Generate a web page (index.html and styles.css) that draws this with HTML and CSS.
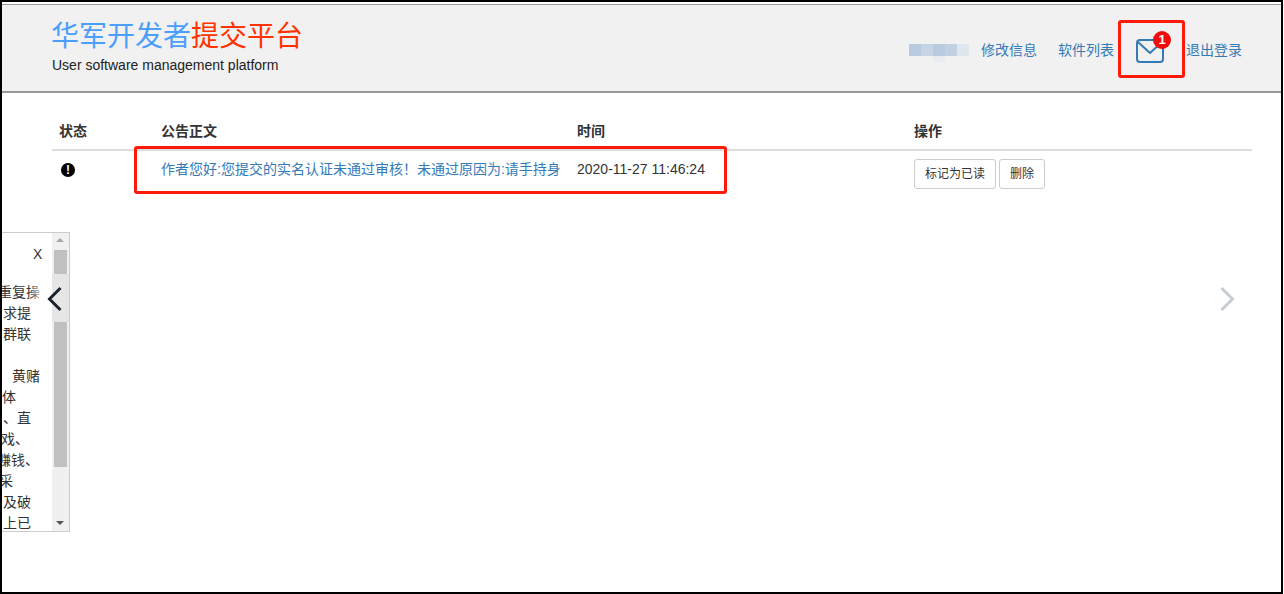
FILE: index.html
```html
<!DOCTYPE html>
<html lang="zh-CN">
<head>
<meta charset="utf-8">
<title>华军开发者提交平台</title>
<link rel="stylesheet" href="styles.css">
</head>
<body>
<div class="frame">
  <header class="header">
    <div class="logo">
      <h1 class="logo-title"><span class="blue">华军开发者</span><span class="red">提交平台</span></h1>
      <p class="logo-sub">User software management platform</p>
    </div>
    <nav class="nav">
      <span class="blurred-user"></span>
      <a class="nav-link first" href="#">修改信息</a>
      <a class="nav-link second" href="#">软件列表</a>
      <a class="mail" href="#">
        <svg class="mail-icon" width="28" height="24" viewBox="0 0 28 24" fill="none" stroke="#337ab7" stroke-width="2" stroke-linejoin="round">
          <rect x="1" y="1" width="26" height="22" rx="3"/>
          <path d="M2 3 L14 14 L26 3"/>
        </svg>
        <span class="badge">1</span>
      </a>
      <a class="nav-link" href="#">退出登录</a>
    </nav>
  </header>

  <main class="content">
    <table class="notice-table">
      <colgroup>
        <col class="col-status">
        <col class="col-body">
        <col class="col-time">
        <col class="col-actions">
      </colgroup>
      <thead>
        <tr><th>状态</th><th>公告正文</th><th>时间</th><th>操作</th></tr>
      </thead>
      <tbody>
        <tr>
          <td><span class="alert-dot">!</span></td>
          <td><a class="notice-link" href="#">作者您好:您提交的实名认证未通过审核！未通过原因为:请手持身</a></td>
          <td>2020-11-27 11:46:24</td>
          <td><button class="btn btn-first">标记为已读</button><button class="btn">删除</button></td>
        </tr>
      </tbody>
    </table>
  </main>

  <div class="mark mark-mail"></div>
  <div class="mark mark-row"></div>

  <aside class="popup">
    <div class="popup-close">X</div>
    <div class="popup-text">
      <div class="line end-40">重复操</div>
      <div class="line end-31">求提</div>
      <div class="line end-31">群联</div>
      <div class="line end-31">&nbsp;</div>
      <div class="line end-40">黄赌</div>
      <div class="line end-16">体</div>
      <div class="line end-31">、直</div>
      <div class="line end-29">戏、</div>
      <div class="line end-39">赚钱、</div>
      <div class="line end-13">采</div>
      <div class="line end-31">及破</div>
      <div class="line end-31">上已</div>
    </div>
    <div class="scrollbar">
      <span class="arrow-up"></span>
      <span class="thumb"></span>
      <span class="arrow-down"></span>
    </div>
  </aside>

  <div class="carousel-band"></div>
  <svg class="chevron chevron-left" width="16" height="26" viewBox="0 0 16 26" fill="none" stroke="#1a2430" stroke-width="3">
    <path d="M13.5 2 L2.5 13 L13.5 24"/>
  </svg>
  <svg class="chevron chevron-right" width="16" height="26" viewBox="0 0 16 26" fill="none" stroke="#c6ccd2" stroke-width="3">
    <path d="M2.5 2 L13.5 13 L2.5 24"/>
  </svg>
</div>
</body>
</html>
```
FILE: styles.css
```css
* { box-sizing: border-box; }
html, body { margin: 0; padding: 0; background: #fff; }
body {
  font-family: "Liberation Sans", "Noto Sans CJK SC", sans-serif;
  font-size: 14px;
  line-height: 20px;
  color: #333;
}
a { color: #337ab7; text-decoration: none; }

.frame {
  position: relative;
  width: 1283px;
  height: 594px;
  border: 2px solid #000;
  padding-top: 2px;
  overflow: hidden;
  background: #fff;
}

.header {
  display: flex;
  height: 89px;
  padding: 16px 39px 0 50px;
  background: #f1f1f1;
  border-top: 1px solid #999;
  border-bottom: 2px solid #999;
}
.logo-title { margin: 0 0 0 -1px; font-size: 28px; line-height: 32px; font-weight: 400; }
.blue { color: #4b9ffb; }
.red { color: #ff3300; }
.logo-sub { margin: 2px 0 0; color: #222; }

.nav { display: flex; align-items: center; height: 58px; margin-left: auto; }
.blurred-user {
  position: relative;
  width: 60px;
  height: 12px;
  margin-right: 12px;
  background: linear-gradient(90deg, #b9cbde 0 12px, #c6d4e3 12px 24px, #b9cbde 24px 36px, #c2d1e1 36px 48px, #dfe6ed 48px 60px);
}
.blurred-user::after {
  content: "";
  position: absolute;
  left: 24px;
  top: 12px;
  width: 12px;
  height: 6px;
  background: #e9edf1;
}
.nav-link.first { margin-right: 21px; }
.mail {
  position: relative;
  display: flex;
  justify-content: center;
  width: 72px;
  padding-top: 2px;
}
.badge {
  position: absolute;
  left: 39px;
  top: -6px;
  width: 18px;
  height: 18px;
  border-radius: 50%;
  background: #f00d0d;
  color: #fff;
  font-size: 13px;
  font-weight: 700;
  line-height: 18px;
  text-align: center;
}

.content { padding: 20px 0 0 50px; }
.notice-table { width: 1200px; border-collapse: collapse; table-layout: fixed; }
.col-status { width: 102px; }
.col-body { width: 415px; }
.col-time { width: 337px; }
.notice-table th {
  padding: 8px;
  text-align: left;
  font-weight: 700;
  border-bottom: 2px solid #ddd;
}
.notice-table td { padding: 8px; vertical-align: top; white-space: nowrap; }
.notice-table th:nth-child(-n+2),
.notice-table td:nth-child(2) { padding-left: 7px; }
.notice-link { display: block; overflow: hidden; }
.alert-dot {
  display: block;
  width: 14px;
  height: 14px;
  margin: 4px 0 0 1px;
  border-radius: 50%;
  background: #000;
  color: #fff;
  font-size: 12px;
  font-weight: 700;
  line-height: 14px;
  text-align: center;
}
.btn {
  height: 30px;
  padding: 5px 10px;
  background: #fff;
  border: 1px solid #ccc;
  border-radius: 3px;
  color: #333;
  font: 12px/18px "Liberation Sans", "Noto Sans CJK SC", sans-serif;
}
.btn-first { margin-right: 3px; }

.mark {
  position: absolute;
  border: 3px solid #ff1a0a;
  border-radius: 3px;
  pointer-events: none;
}
.mark-mail { left: 1116px; top: 18px; width: 67px; height: 58px; }
.mark-row { left: 132px; top: 144px; width: 593px; height: 48px; }

.popup {
  position: absolute;
  left: -2px;
  top: 230px;
  width: 70px;
  height: 300px;
  background: #fff;
  border: 1px solid #ccc;
  border-left: 0;
}
.popup-close { position: absolute; left: 33px; top: 11px; color: #333; }
.popup-text { position: absolute; left: 0; top: 49px; width: 52px; height: 250px; overflow: hidden; }
.line { display: flex; justify-content: flex-end; height: 21px; line-height: 21px; white-space: nowrap; color: #333; }
.end-40 { width: 40px; }
.end-39 { width: 39px; }
.end-31 { width: 31px; }
.end-29 { width: 29px; }
.end-16 { width: 16px; }
.end-13 { width: 13px; }

.scrollbar { position: absolute; left: 52px; top: 0; width: 17px; height: 298px; background: #f0f0f0; }
.thumb { position: absolute; left: 2px; top: 17px; width: 13px; height: 217px; background: #c0c0c0; }
.arrow-up, .arrow-down {
  position: absolute;
  left: 4px;
  width: 0;
  height: 0;
  border-left: 4px solid transparent;
  border-right: 4px solid transparent;
}
.arrow-up { top: 5px; border-bottom: 4px solid #a8a8a8; }
.arrow-down { bottom: 6px; border-top: 4px solid #555; }

.carousel-band {
  position: absolute;
  left: 28px;
  top: 272px;
  width: 39px;
  height: 48px;
  background: linear-gradient(90deg, rgba(255,255,255,0) 0, rgba(255,255,255,.8) 12px, #fff 22px, #e6e6e6 22px);
}
.chevron { position: absolute; }
.chevron-left { left: 45px; top: 284px; }
.chevron-right { left: 1217px; top: 284px; }
```
